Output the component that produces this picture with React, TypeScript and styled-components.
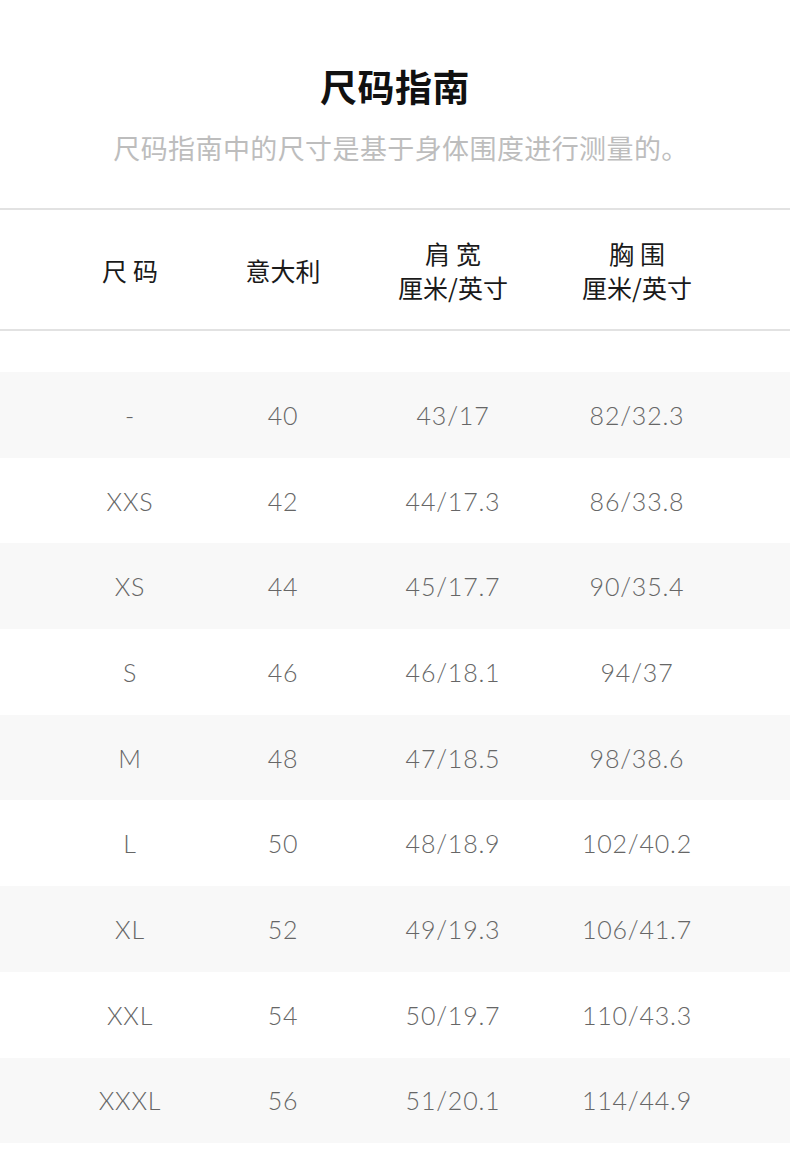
import React from "react";
import styled, { createGlobalStyle } from "styled-components";

const Global = createGlobalStyle`
  html, body { margin: 0; padding: 0; background: #fff; }
  body { font-family: "Noto Sans CJK SC", "Noto Sans", sans-serif; }
`;

const Page = styled.div`
  width: 790px;
  padding-top: 62px;
`;

const Title = styled.h1`
  margin: 0;
  text-align: center;
  font-size: 37px;
  line-height: 48px;
  font-weight: 700;
  color: #111;
  letter-spacing: 0.5px;
`;

const Subtitle = styled.p`
  margin: 18px 0 0;
  padding-left: 12px;
  text-align: center;
  font-size: 27px;
  line-height: 40px;
  color: #bdbdbd;
  font-weight: 400;
  letter-spacing: 0.4px;
`;

const Table = styled.div`
  margin-top: 40px;
  border-top: 2px solid #e2e2e2;
`;

const cols = "160px 146px 194px 174px";

const HeaderRow = styled.div`
  display: grid;
  grid-template-columns: ${cols};
  padding-left: 50px;
  height: 119px;
  align-items: center;
  border-bottom: 2px solid #e2e2e2;
  margin-bottom: 41px;
`;

const HeadCell = styled.div`
  text-align: center;
  font-size: 25px;
  line-height: 34px;
  color: #1a1a1a;
`;

const Spaced = styled.div`
  letter-spacing: 6px;
  text-indent: 6px;
`;

const Row = styled.div<{ $shade: boolean }>`
  display: grid;
  grid-template-columns: ${cols};
  padding-left: 50px;
  height: 85.7px;
  align-items: center;
  background: ${(p) => (p.$shade ? "#f8f8f8" : "#fff")};
`;

const Cell = styled.div`
  text-align: center;
  font-family: "Lato", "Noto Sans", sans-serif;
  font-size: 25px;
  font-weight: 300;
  letter-spacing: 0.8px;
  color: #666;
`;

const data: string[][] = [
  ["-", "40", "43/17", "82/32.3"],
  ["XXS", "42", "44/17.3", "86/33.8"],
  ["XS", "44", "45/17.7", "90/35.4"],
  ["S", "46", "46/18.1", "94/37"],
  ["M", "48", "47/18.5", "98/38.6"],
  ["L", "50", "48/18.9", "102/40.2"],
  ["XL", "52", "49/19.3", "106/41.7"],
  ["XXL", "54", "50/19.7", "110/43.3"],
  ["XXXL", "56", "51/20.1", "114/44.9"],
];

export default function App() {
  return (
    <Page>
      <Global />
      <Title>尺码指南</Title>
      <Subtitle>尺码指南中的尺寸是基于身体围度进行测量的。</Subtitle>
      <Table>
        <HeaderRow>
          <HeadCell>
            <Spaced>尺码</Spaced>
          </HeadCell>
          <HeadCell>意大利</HeadCell>
          <HeadCell>
            <Spaced>肩宽</Spaced>
            <div>厘米/英寸</div>
          </HeadCell>
          <HeadCell>
            <Spaced>胸围</Spaced>
            <div>厘米/英寸</div>
          </HeadCell>
        </HeaderRow>
        {data.map((r, i) => (
          <Row key={i} $shade={i % 2 === 0}>
            {r.map((c, j) => (
              <Cell key={j}>{c}</Cell>
            ))}
          </Row>
        ))}
      </Table>
    </Page>
  );
}
